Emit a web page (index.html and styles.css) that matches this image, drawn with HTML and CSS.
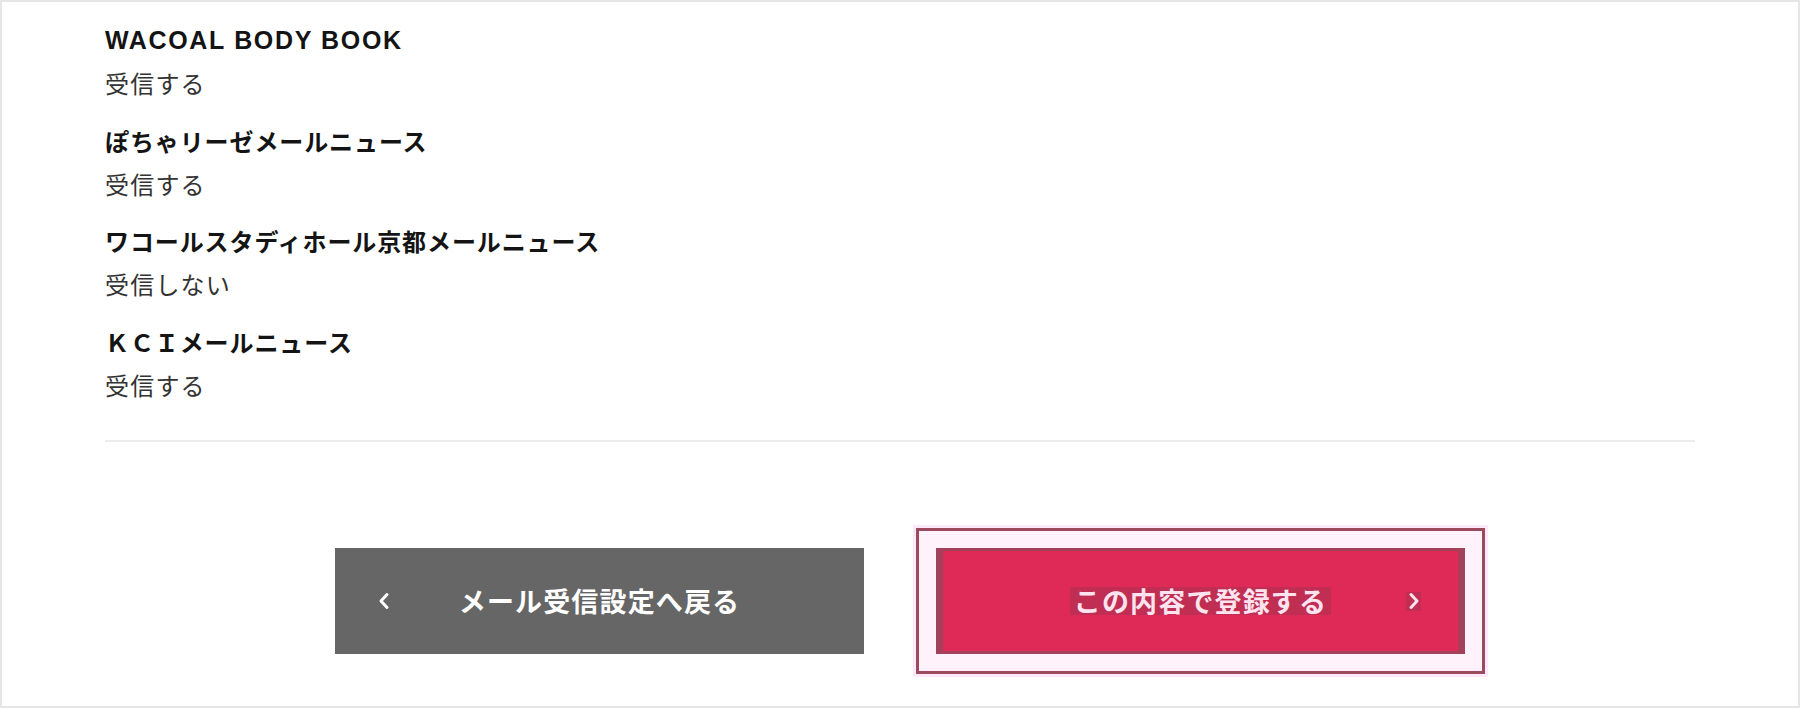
FILE: index.html
```html
<!DOCTYPE html>
<html lang="ja">
<head>
<meta charset="utf-8">
<title>メール受信設定 確認</title>
<link rel="stylesheet" href="styles.css">
</head>
<body>
<div class="page">
  <dl class="settings">
    <div class="item">
      <dt class="item-title item-title-latin">WACOAL BODY BOOK</dt>
      <dd class="item-value">受信する</dd>
    </div>
    <div class="item">
      <dt class="item-title">ぽちゃリーゼメールニュース</dt>
      <dd class="item-value">受信する</dd>
    </div>
    <div class="item">
      <dt class="item-title">ワコールスタディホール京都メールニュース</dt>
      <dd class="item-value">受信しない</dd>
    </div>
    <div class="item">
      <dt class="item-title">ＫＣＩメールニュース</dt>
      <dd class="item-value">受信する</dd>
    </div>
  </dl>
  <hr class="divider">
  <div class="actions">
    <button class="btn btn-back" type="button">
      <svg class="chev chev-left" width="12" height="18" viewBox="0 0 12 18"><polyline points="9,2.5 3,9 9,15.5" fill="none" stroke="#fff" stroke-width="3" stroke-linecap="round" stroke-linejoin="round"/></svg>
      <span class="btn-label">メール受信設定へ戻る</span>
    </button>
    <button class="btn btn-submit" type="button">
      <span class="btn-label btn-label-hl">この内容で登録する</span>
      <span class="chev-wrap"><svg class="chev" width="12" height="18" viewBox="0 0 12 18"><polyline points="3,2.5 9,9 3,15.5" fill="none" stroke="#ffe2ee" stroke-width="3" stroke-linecap="round" stroke-linejoin="round"/></svg></span>
    </button>
  </div>
</div>
</body>
</html>
```
FILE: styles.css
```css
html, body {
  margin: 0;
  padding: 0;
  background: #ffffff;
}

body {
  font-family: "Liberation Sans", "Noto Sans CJK JP", sans-serif;
}

.page {
  box-sizing: border-box;
  width: 1800px;
  height: 708px;
  border: 2px solid #e6e6e6;
  padding: 17px 103px 0;
  background: #ffffff;
}

.settings {
  margin: 0;
  display: flex;
  flex-direction: column;
  gap: 14.5px;
}

.item {
  display: flex;
  flex-direction: column;
}

.item-title {
  margin: 0;
  font-family: "Noto Sans CJK JP", sans-serif;
  font-weight: 700;
  font-size: 24px;
  letter-spacing: 0.9px;
  line-height: 42px;
  color: #141414;
}

.item-title-latin {
  font-family: "Liberation Sans", "Noto Sans CJK JP", sans-serif;
  font-size: 25px;
  letter-spacing: 1.65px;
}

.item-value {
  margin: 0;
  font-family: "Noto Sans CJK JP", sans-serif;
  font-weight: 400;
  font-size: 24px;
  letter-spacing: 1.2px;
  line-height: 44px;
  color: #333333;
}

.divider {
  margin: 33px 0 0;
  border: 0;
  border-top: 2px solid #ebebeb;
  height: 0;
}

.actions {
  margin-top: 106px;
  display: flex;
  justify-content: center;
  gap: 72px;
}

.btn {
  position: relative;
  box-sizing: border-box;
  width: 529px;
  height: 106px;
  display: flex;
  align-items: center;
  justify-content: center;
  border: 0;
  padding: 0;
  font-family: "Noto Sans CJK JP", sans-serif;
  font-weight: 700;
  font-size: 27px;
  letter-spacing: 1.15px;
  cursor: pointer;
}

.btn-back {
  background: #666666;
  color: #ffffff;
}

.btn-back .chev-left {
  position: absolute;
  left: 43px;
  top: 44px;
}

.btn-submit {
  background: #df2a58;
  color: #ffe4ef;
  border-style: solid;
  border-color: #a3405a;
  border-width: 3px 7px;
  outline: 3px solid #9c4a5d;
  outline-offset: 17px;
  box-shadow: 0 0 0 17px #fff2fb, 0 0 0 23px #fde9fa;
}

.btn-label {
  display: inline-block;
  line-height: 28px;
}

.btn-label-hl {
  background: #c02e53;
  padding: 0 4px;
}

.chev-wrap {
  position: absolute;
  right: 37px;
  top: 41px;
  width: 15px;
  height: 19px;
  display: flex;
  align-items: center;
  justify-content: center;
  background: #c02e53;
}
```
